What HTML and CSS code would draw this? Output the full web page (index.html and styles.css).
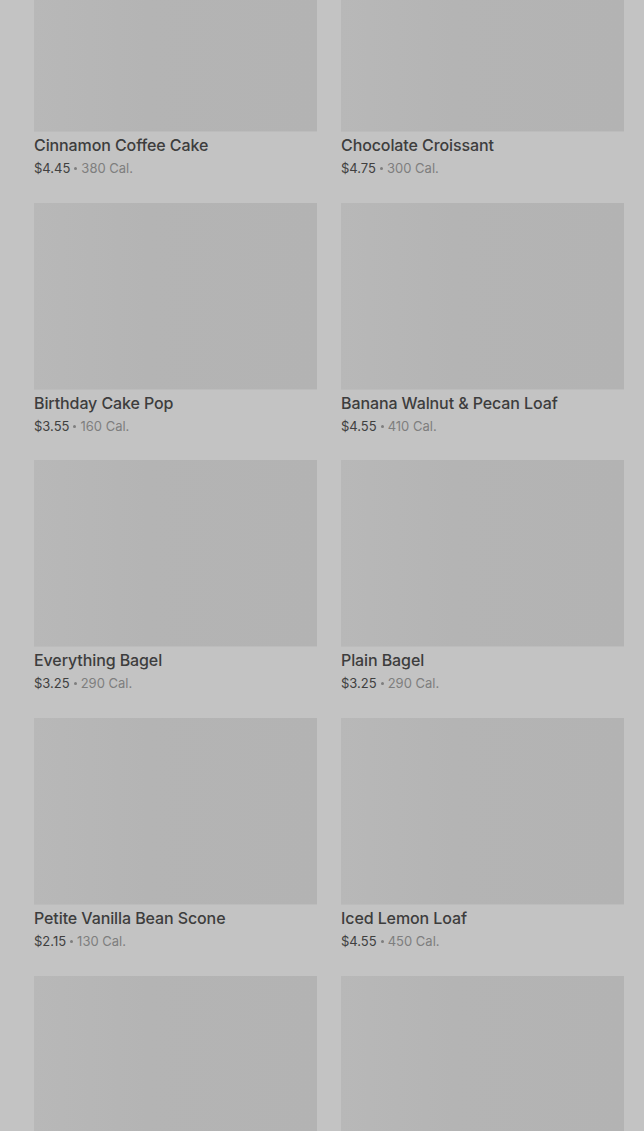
FILE: index.html
```html
<!DOCTYPE html>
<html lang="en">
<head>
<meta charset="utf-8">
<title>Bakery</title>
<link rel="stylesheet" href="styles.css">
</head>
<body>
<main class="menu">
  <div class="grid">
    <article class="card"><div class="thumb"></div><h3 class="name">Cinnamon Coffee Cake</h3><p class="meta"><span class="price">$4.45</span><span class="dot"></span><span class="cal">380 Cal.</span></p></article>
    <article class="card"><div class="thumb"></div><h3 class="name">Chocolate Croissant</h3><p class="meta"><span class="price">$4.75</span><span class="dot"></span><span class="cal">300 Cal.</span></p></article>
    <article class="card"><div class="thumb"></div><h3 class="name">Birthday Cake Pop</h3><p class="meta"><span class="price">$3.55</span><span class="dot"></span><span class="cal">160 Cal.</span></p></article>
    <article class="card"><div class="thumb"></div><h3 class="name">Banana Walnut &amp; Pecan Loaf</h3><p class="meta"><span class="price">$4.55</span><span class="dot"></span><span class="cal">410 Cal.</span></p></article>
    <article class="card"><div class="thumb"></div><h3 class="name">Everything Bagel</h3><p class="meta"><span class="price">$3.25</span><span class="dot"></span><span class="cal">290 Cal.</span></p></article>
    <article class="card"><div class="thumb"></div><h3 class="name">Plain Bagel</h3><p class="meta"><span class="price">$3.25</span><span class="dot"></span><span class="cal">290 Cal.</span></p></article>
    <article class="card"><div class="thumb"></div><h3 class="name">Petite Vanilla Bean Scone</h3><p class="meta"><span class="price">$2.15</span><span class="dot"></span><span class="cal">130 Cal.</span></p></article>
    <article class="card"><div class="thumb"></div><h3 class="name">Iced Lemon Loaf</h3><p class="meta"><span class="price">$4.55</span><span class="dot"></span><span class="cal">450 Cal.</span></p></article>
    <article class="card"><div class="thumb"></div></article>
    <article class="card"><div class="thumb"></div></article>
  </div>
</main>
</body>
</html>
```
FILE: styles.css
```css
html, body {
  margin: 0;
  padding: 0;
  background: #c3c3c3;
  overflow: hidden;
}
body {
  font-family: Inter, "Noto Sans", "Liberation Sans", sans-serif;
  height: 1131px;
}
.menu {
  padding: 0 20px 0 34px;
}
.grid {
  margin-top: -55px;
  display: grid;
  grid-template-columns: 283px 283px;
  grid-auto-rows: 232px;
  column-gap: 24px;
  row-gap: 25.7px;
}
.card {
  margin: 0;
  display: flex;
  flex-direction: column;
}
.thumb {
  flex: none;
  height: 187px;
  background: linear-gradient(90deg, #b8b8b8 0%, #b4b4b4 40%, #b3b3b3 100%);
  border-bottom: 1px solid #bcbcbc;
  box-sizing: border-box;
}
.name {
  margin: 3px 0 0;
  font-size: 16px;
  line-height: 20px;
  font-weight: 500;
  color: #3d3d3d;
  letter-spacing: -0.1px;
}
.meta {
  margin: 4px 0 0;
  font-size: 13px;
  line-height: 18px;
  color: #7e7e7e;
  display: flex;
  align-items: center;
}
.price {
  color: #404040;
}
.dot {
  width: 3px;
  height: 3px;
  border-radius: 50%;
  background: #7e7e7e;
  margin: 1px 4px 0;
}
```
